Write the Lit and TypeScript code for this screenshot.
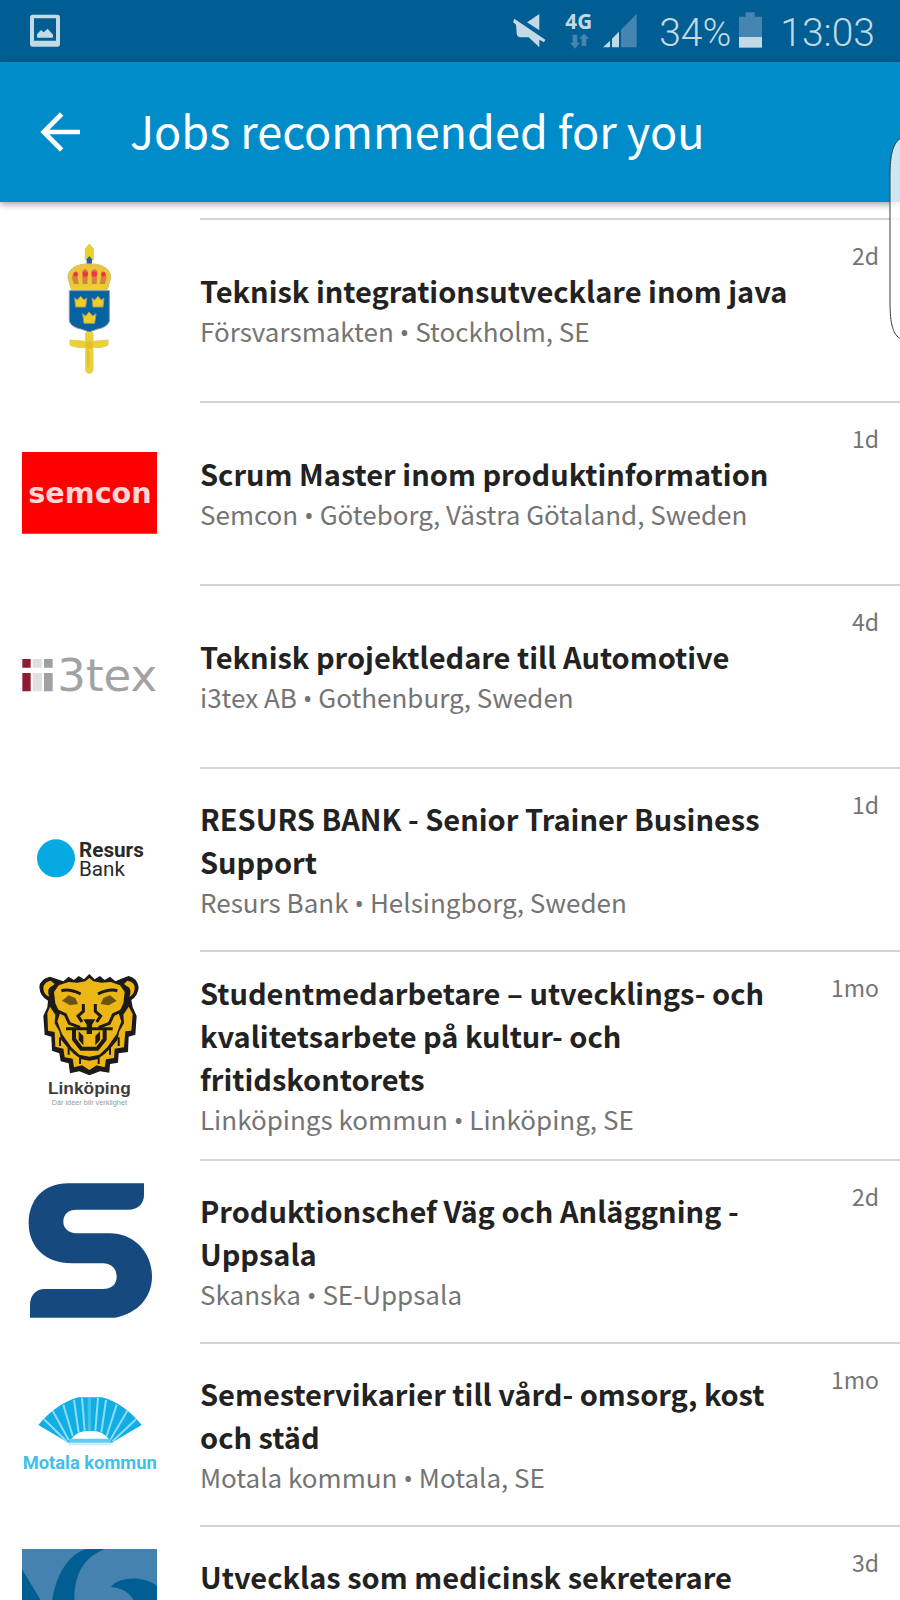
import { LitElement, TemplateResult, css, html } from 'lit';
import { customElement } from 'lit/decorators.js';

interface Job {
    title: string;
    company: string;
    place: string;
    age: string;
    logo: TemplateResult;
}

const forsvarsmakten = html`<svg viewBox="66 42 405 405" aria-hidden="true">
    <path d="M268 48 L280 62 V96 H256 V62Z" fill="#ecd02a" stroke="#d9c77c" stroke-width="3" />
    <path d="M268 84 L276 94 V110 H260 V94Z" fill="#1c64a0" />
    <path d="M214 184 L204 150 C202 118 240 106 268 108 C296 106 334 118 332 150 L322 184Z" fill="#ecc53a" stroke="#d8bd74" stroke-width="3" />
    <g fill="#cf8443">
        <path d="M216 150 Q218 132 230 128 L236 168 H222Z" />
        <path d="M246 130 Q256 116 264 130 L262 168 H248Z" />
        <path d="M274 130 Q282 116 292 130 L290 168 H276Z" />
        <path d="M320 150 Q318 132 306 128 L300 168 H314Z" />
    </g>
    <g fill="#f5333f">
        <circle cx="227" cy="139" r="7" />
        <circle cx="256" cy="138" r="8" />
        <circle cx="283" cy="138" r="8" />
        <circle cx="310" cy="139" r="7" />
    </g>
    <path d="M214 170 H322 V184 H214Z" fill="#ecd02a" />
    <path d="M208 188 H328 V280 Q322 298 290 304 L268 312 L246 304 Q214 298 208 280Z" fill="#0762a2" stroke="#8597a8" stroke-width="3" />
    <g fill="#ecd02a" stroke="#a39c62" stroke-width="3">
        <path d="M224 210 L232 216 L242 205 L252 216 L260 210 L257 237 H227Z" />
        <path d="M276 210 L284 216 L294 205 L304 216 L312 210 L309 237 H279Z" />
        <path d="M248 257 L257 264 L267 252 L278 264 L288 257 L284 286 H252Z" />
    </g>
    <path d="M257 314 H279 V340 L324 336 V352 Q302 362 279 358 V420 Q280 436 268 436 Q256 436 257 420 V358 Q234 362 210 352 V336 L257 340Z" fill="#edd22c" stroke="#e0cc74" stroke-width="3" />
    <circle cx="268" cy="351" r="12" fill="#e5bf30" />
    <path d="M264 366 V416" stroke="#d4b549" stroke-width="4" />
</svg>`;

const semcon = html`<svg viewBox="66 -42 405 405" aria-hidden="true">
    <path d="M66 39 H474 V284 H66Z" fill="#fe0000" />
    <text class="semcon" x="270" y="192" text-anchor="middle">semcon</text>
</svg>`;

const i3tex = html`<svg viewBox="66 -93 405 405" aria-hidden="true">
    <path d="M67 60 H92 V86 H67Z M67 102 H92 V157 H67Z" fill="#8f1a35" />
    <path d="M98 60 H126 V86 H98Z M98 102 H126 V157 H98Z" fill="#e0e0e0" />
    <path d="M132 60 H158 V86 H132Z M132 102 H158 V157 H132Z" fill="#a0a0a0" />
    <text class="i3tex" x="172" y="157">3tex</text>
</svg>`;

const resurs = html`<svg viewBox="66 -86 405 405" aria-hidden="true">
    <circle cx="168" cy="116" r="57" fill="#07a9e2" />
    <text class="resurs resurs-bold" x="237" y="111">Resurs</text>
    <text class="resurs" x="237" y="168">Bank</text>
</svg>`;

const linkoping = html`<svg viewBox="66 42 405 405" aria-hidden="true">
    <path
        d="M150 50 L172 58 L190 64 L206 50 L222 60 L236 48 L252 58 L268 42 L284 58 L300 48 L314 60 L330 50 L346 64 L364 56 L386 48 Q412 54 416 82 Q414 108 394 120 L398 142 L410 168 L406 224 L386 230 L384 276 L356 280 L354 308 L330 312 L328 338 L300 334 L268 346 L238 334 L210 340 L206 310 L182 304 L178 280 L156 272 L154 230 L134 224 L130 168 L142 142 L144 122 Q120 110 118 82 Q120 56 150 50Z"
        fill="#1c1a1b"
    />
    <g fill="#ebb616">
        <path d="M152 62 Q130 66 130 86 Q132 104 148 110 Q140 92 150 82 Q160 76 164 72Z" />
        <path d="M382 62 Q406 66 404 86 Q402 104 388 110 Q396 92 386 82 Q376 76 372 72Z" />
        <path d="M176 76 L206 66 L232 68 L256 64 L268 54 L280 64 L304 68 L332 66 L360 76 L374 96 L370 130 L356 160 L364 184 L350 222 L322 262 L298 284 L268 290 L238 284 L214 262 L186 222 L172 184 L180 160 L166 130 L162 96Z" />
        <path d="M142 160 L150 140 L166 164 L164 190 L178 214 L184 240 L202 262 L222 282 L244 298 L268 302 L292 298 L314 282 L334 262 L352 240 L358 214 L372 190 L370 164 L386 140 L398 162 L394 212 L376 214 L372 262 L344 266 L342 294 L318 298 L314 322 L290 316 L268 330 L246 316 L222 322 L218 296 L194 292 L190 266 L166 260 L164 216 L144 212Z" />
    </g>
    <g fill="none" stroke="#1c1a1b" stroke-width="9">
        <path d="M184 92 Q210 86 242 102 M352 92 Q326 86 294 102" />
        <path d="M250 132 V154 L234 168 L246 186 M286 132 V154 L302 168 L290 186" />
        <path d="M170 152 L196 164 L208 190 L240 202 M366 152 L340 164 L328 190 L296 202" />
        <path d="M198 206 H338" />
        <path d="M222 210 V238 L244 266 H292 L314 238 V210" stroke-width="12" />
        <path d="M180 232 V258 M356 232 V258 M206 262 V284 M330 262 V284 M240 292 V312 M296 292 V312" stroke-width="6" />
    </g>
    <path d="M186 122 L206 106 L226 114 L234 132 L210 136Z M350 122 L330 106 L310 114 L302 132 L326 136Z" fill="#6b5312" />
    <path d="M250 178 H286 L276 194 V222 H260 V194Z" fill="#1c1a1b" />
    <path d="M236 214 L250 228 V256 L236 240Z M300 214 L286 228 V256 L300 240Z" fill="#1c1a1b" />
    <text class="linkoping" x="268" y="402" text-anchor="middle">Linköping</text>
    <text class="linkoping-small" x="268" y="436" text-anchor="middle">Där idéer blir verklighet</text>
</svg>`;

const skanska = html`<svg viewBox="66 39 405 405" aria-hidden="true">
    <path
        d="M432 40 H205 C130 40 86 90 86 160 C86 230 135 280 215 280 H310 C335 280 350 298 350 320 C350 342 335 357 308 357 H135 C105 357 90 378 90 405 V443 H345 C415 430 456 380 456 320 C456 245 400 190 330 190 H235 C205 190 190 175 190 155 C190 133 205 119 230 119 H385 C415 119 432 100 432 75Z"
        fill="#164a7e"
    />
</svg>`;

const motala = html`<svg viewBox="66 -42 405 405" aria-hidden="true">
    <path d="M115 135 Q170 70 235 52 H305 Q370 68 425 135 L335 188 H205Z" fill="#10aee5" />
    <path d="M202 186 L132 118 M206 180 L158 92 M218 168 L190 74 M236 158 L222 60 M254 152 L246 54 M286 152 L294 54 M304 158 L318 60 M320 168 L350 74 M332 178 L382 92 M338 184 L408 118" stroke="#8fdcf4" stroke-width="6" />
    <path d="M268 52 V150" stroke="#3ec3eb" stroke-width="10" />
    <path d="M207 190 Q222 152 270 152 Q318 152 333 190Z" fill="#fff" />
    <path d="M206 182 H334" stroke="#5fcdef" stroke-width="12" />
    <path d="M206 193 H334" stroke="#c5edf9" stroke-width="6" />
    <text class="motala" x="269" y="266" text-anchor="middle">Motala kommun</text>
</svg>`;

const sahlgrenska = html`<svg viewBox="66 84 405 405" aria-hidden="true">
    <path d="M66 84 H471 V489 H66Z" fill="#4682b0" />
    <g fill="#005e93">
        <path d="M66 145 L126 244 L150 330 L66 330Z" />
        <path d="M153 330 C145 200 190 105 258 84 H315 C225 120 210 200 232 330Z" />
        <path d="M332 198 C360 165 430 165 472 195 V330 H420 C418 235 390 204 332 198Z" />
    </g>
    <text class="sahlgrenska" x="267" y="266" text-anchor="middle">SAHLGRENSKA</text>
</svg>`;

const jobs: Job[] = [
    { title: 'Teknisk integrationsutvecklare inom java', company: 'Försvarsmakten', place: 'Stockholm, SE', age: '2d', logo: forsvarsmakten },
    { title: 'Scrum Master inom produktinformation', company: 'Semcon', place: 'Göteborg, Västra Götaland, Sweden', age: '1d', logo: semcon },
    { title: 'Teknisk projektledare till Automotive', company: 'i3tex AB', place: 'Gothenburg, Sweden', age: '4d', logo: i3tex },
    { title: 'RESURS BANK - Senior Trainer Business Support', company: 'Resurs Bank', place: 'Helsingborg, Sweden', age: '1d', logo: resurs },
    { title: 'Studentmedarbetare – utvecklings- och kvalitetsarbete på kultur- och fritidskontorets', company: 'Linköpings kommun', place: 'Linköping, SE', age: '1mo', logo: linkoping },
    { title: 'Produktionschef Väg och Anläggning - Uppsala', company: 'Skanska', place: 'SE-Uppsala', age: '2d', logo: skanska },
    { title: 'Semestervikarier till vård- omsorg, kost och städ', company: 'Motala kommun', place: 'Motala, SE', age: '1mo', logo: motala },
    { title: 'Utvecklas som medicinsk sekreterare Sahlgrenska', company: 'Sahlgrenska', place: 'Göteborg, SE', age: '3d', logo: sahlgrenska },
];

@customElement('status-bar')
export class StatusBar extends LitElement {
    static styles = css`
        :host {
            display: flex;
            align-items: center;
            box-sizing: border-box;
            height: 62px;
            padding: 0 25px 0 30px;
            background: #005e93;
            color: #c2d9e6;
            font-family: Roboto, sans-serif;
            font-size: 39px;
            font-weight: 300;
        }

        svg {
            display: block;
            height: 62px;
            flex: none;
            fill: #c2d9e6;
        }

        span {
            padding-top: 3px;
        }

        .spacer {
            flex: 1;
        }

        .photo {
            width: 30px;
        }

        .mute {
            width: 33px;
            margin-right: 19px;
        }

        .network {
            width: 28px;
            margin-right: 10px;
        }

        .network text {
            font: 700 62px 'Open Sans', sans-serif;
        }

        .signal {
            width: 34px;
            margin-right: 22px;
        }

        .battery {
            width: 23px;
            margin: 0 18px 0 8px;
        }

        .dim {
            fill: #4685b2;
        }
    `;

    render() {
        return html`
            <svg class="photo" viewBox="90 0 90 186" aria-hidden="true">
                <path fill-rule="evenodd" d="M98 44 H172 Q180 44 180 52 V132 Q180 140 172 140 H98 Q90 140 90 132 V52 Q90 44 98 44Z M102 55 V122 H168 V55Z" />
                <path d="M111 113 V103 L123 90 L131 97 L143 86 L159 104 V113Z" />
            </svg>
            <span class="spacer"></span>
            <svg class="mute" viewBox="188 0 99 186" aria-hidden="true">
                <path d="M267 42 V91 L230 67Z" />
                <path d="M192 56 L285 119 L281 127 L267 119 V142 L235 112 H208 Q200 110 199 100 L197 74 L188 66Z" />
            </svg>
            <svg class="network" viewBox="343 0 84 186" aria-hidden="true">
                <text x="344" y="87">4G</text>
                <path class="dim" d="M366 104 H380 V128 H388 L373 146 L358 128 H366Z M393 138 H407 V116 H416 L400 101 L385 116 H393Z" />
            </svg>
            <svg class="signal" viewBox="459 0 102 186" aria-hidden="true">
                <path d="M459 142 L480 122 V142Z M486 142 V116 L507 95 V142Z" />
                <path class="dim" d="M513 142 V89 L560 42 V142Z" />
            </svg>
            <span>34%</span>
            <svg class="battery" viewBox="868 0 69 186" aria-hidden="true">
                <path class="dim" d="M868 50 H888 V37 H915 V50 H937 V112 H868Z" />
                <path d="M868 111 H937 V143 H868Z" />
            </svg>
            <span>13:03</span>
        `;
    }
}

@customElement('app-bar')
export class AppBar extends LitElement {
    static styles = css`
        :host {
            display: flex;
            align-items: center;
            height: 140px;
            padding-left: 40px;
            background: #008cc9;
            box-shadow: 0 2px 7px rgba(0, 0, 0, 0.4);
            color: white;
            z-index: 1;
        }

        button {
            margin: 0 50px 0 0;
            padding: 0;
            border: none;
            background: none;
            color: inherit;
            cursor: pointer;
        }

        svg {
            display: block;
            width: 40px;
            height: 40px;
        }

        h1 {
            margin: 0;
            padding-bottom: 4px;
            font-size: 45px;
            font-weight: 400;
            line-height: 60px;
        }
    `;

    render() {
        return html`
            <button type="button" aria-label="Back">
                <svg viewBox="0 0 120 120" fill="none" stroke="currentColor" stroke-width="14">
                    <path d="M65 6 L11 60 L65 114 M10 60 H120" />
                </svg>
            </button>
            <h1>Jobs recommended for you</h1>
        `;
    }
}

@customElement('job-row')
export class JobRow extends LitElement {
    static properties = {
        job: { attribute: false },
    };

    declare job: Job;

    static styles = css`
        :host {
            display: block;
        }

        a {
            display: flex;
            color: inherit;
            text-decoration: none;
        }

        .logo {
            flex: none;
            width: 178px;
            padding: 24px 0 24px 22px;
        }

        .logo svg {
            display: block;
            width: 135px;
            height: 135px;
        }

        .content {
            display: flex;
            flex: 1;
            border-top: 2px solid #d4d4d4;
        }

        .text {
            display: flex;
            flex: 1;
            flex-direction: column;
            justify-content: center;
            padding: 19px 0 21px;
        }

        h2 {
            margin: 0;
            color: #222;
            font-size: 29px;
            font-weight: 700;
            line-height: 43px;
        }

        p {
            margin: 0;
            color: #747474;
            font-size: 26px;
            line-height: 38px;
        }

        /* the CJK family draws a full-width bullet */
        .dot {
            font-family: 'Open Sans', sans-serif;
            line-height: 1;
        }

        .age {
            box-sizing: border-box;
            flex: none;
            width: 90px;
            padding: 16px 21px 0 0;
            color: #747474;
            font-size: 23px;
            line-height: 38px;
            text-align: right;
        }

        .semcon {
            fill: #ffd5d5;
            font: 700 86px 'DejaVu Sans', sans-serif;
        }

        .i3tex {
            fill: #a2a2a2;
            font: 400 135px 'DejaVu Sans', sans-serif;
        }

        .resurs {
            fill: #2a2a2a;
            font: 400 62px Roboto, sans-serif;
        }

        .resurs-bold {
            font-weight: 700;
        }

        .linkoping {
            fill: #3c3c3c;
            font: 700 52px 'Liberation Sans', sans-serif;
        }

        .linkoping-small {
            fill: #999;
            font: 400 22px 'Liberation Sans', sans-serif;
        }

        .motala {
            fill: #3fc0ea;
            font: 700 55px Roboto, sans-serif;
        }

        .sahlgrenska {
            fill: white;
            font: 700 46px 'Liberation Sans', sans-serif;
        }
    `;

    render() {
        const { title, company, place, age, logo } = this.job;
        return html`<a href="#">
            <div class="logo">${logo}</div>
            <div class="content">
                <div class="text">
                    <h2>${title}</h2>
                    <p>${company} <span class="dot">•</span> ${place}</p>
                </div>
                <span class="age">${age}</span>
            </div>
        </a>`;
    }
}

@customElement('app-root')
export class AppRoot extends LitElement {
    static styles = css`
        :host {
            display: flex;
            flex-direction: column;
            position: relative;
            height: 100vh;
            overflow: hidden;
            background: white;
            font-family: 'Noto Sans CJK SC', sans-serif;
        }

        main {
            flex: 1;
            min-height: 0;
            padding-top: 16px;
            overflow-y: auto;
            scrollbar-width: none;
        }

        /* edge panel handle, floats over the bar and the list */
        .edge-handle {
            position: absolute;
            top: 136px;
            right: 0;
            width: 11px;
            height: 206px;
            z-index: 2;
        }
    `;

    render() {
        return html`
            <status-bar></status-bar>
            <app-bar></app-bar>
            <main>${jobs.map(job => html`<job-row .job=${job}></job-row>`)}</main>
            <svg class="edge-handle" viewBox="0 0 11 206" aria-hidden="true">
                <path d="M12 2 C4 7 1 18 1 40 V166 C1 188 4 199 12 203" fill="rgba(255, 255, 255, 0.8)" stroke="#3c3c3c" />
            </svg>
        `;
    }
}
